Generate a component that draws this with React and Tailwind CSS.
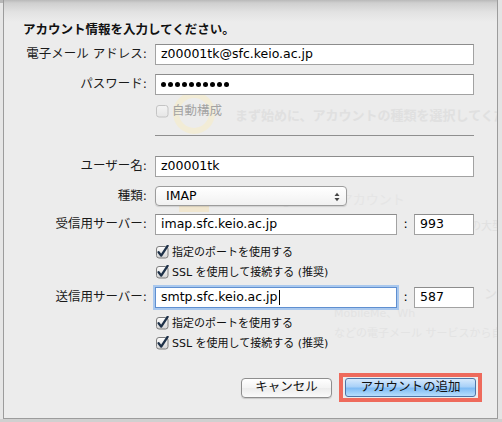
import React from "react"

const font = "font-['DejaVu_Sans','Noto_Sans_CJK_JP',sans-serif]"

function Box({ checked, disabled }) {
  return (
    <svg width="14" height="14" viewBox="0 0 14 14" className="shrink-0">
      <defs>
        <linearGradient id={checked ? "cbg" : "cbd"} x1="0" y1="0" x2="0" y2="1">
          <stop offset="0" stopColor={disabled ? "#f4f4f4" : "#ffffff"} />
          <stop offset="1" stopColor={disabled ? "#e6e6e6" : "#d4d4d4"} />
        </linearGradient>
      </defs>
      <rect x="1.5" y="1.5" width="11.5" height="11.5" rx="2.5"
        fill={`url(#${checked ? "cbg" : "cbd"})`}
        stroke={disabled ? "#c4c4c4" : "#7d7d7d"} />
      {checked && (
        <path d="M3.6 7.2 L6.2 10.6 L12.6 0.8" fill="none" stroke="#1e3148" strokeWidth="2.3" strokeLinecap="round" strokeLinejoin="round" />
      )}
    </svg>
  )
}

function Check({ label, checked = true, disabled = false, small = true }) {
  return (
    <div className="flex h-[20px] items-center gap-[3px] pl-[151px]">
      <Box checked={checked} disabled={disabled} />
      <span className={`${small ? "text-[11px]" : "text-[12.5px]"} ${disabled ? "text-[#a3a3a3]" : "text-[#111]"} leading-none`}>{label}</span>
    </div>
  )
}

function Row({ label, children, className = "" }) {
  return (
    <div className={`grid grid-cols-[143px_1fr] items-center gap-[8px] ${className}`}>
      <div className="text-right text-[12.5px] text-[#1a1a1a] leading-none">{label}</div>
      <div className="flex items-center">{children}</div>
    </div>
  )
}

function Field({ value, width = "w-[319px]", focused, children }) {
  return (
    <div className={`flex h-[21px] ${width} items-center bg-white pl-[5px] text-[12.5px] text-black border ${focused ? "border-[#5f8fd0] shadow-[0_0_0_2px_#a9c8ee]" : "border-[#a2a2a2] border-t-[#8c8c8c]"}`}>
      {value}
      {children}
    </div>
  )
}

function Ghost({ className, children }) {
  return <div className={`absolute whitespace-nowrap text-[#e0e0e0] ${className}`}>{children}</div>
}

export default function App() {
  return (
    <div className={`h-[422px] w-[502px] overflow-hidden bg-[#dedede] ${font}`}>
      <div className="flex h-[419px]">
        <div className="w-[3px] bg-[#e6e6e6] border-t-[3px] border-[#b8b8b8]" />
        <div className="relative w-[495px] overflow-hidden border-x border-b border-[#9c9c9c] bg-[#ececec] bg-[linear-gradient(to_bottom,#b9b9b9_0px,#cfcfcf_3px,#e2e2e2_12px,#ececec_22px)]">
          {/* underlying window, seen through the sheet */}
          <div className="absolute left-[169px] top-[92px] h-[42px] w-[42px] rounded-full border-[6px] border-[#f2ecd6]" />
          <Ghost className="left-[231px] top-[106px] text-[13px] font-bold">まず始めに、アカウントの種類を選択してくだ</Ghost>
          <Ghost className="left-[231px] top-[190px] text-[13px] text-[#e5e5e5]">Exchange 2007 アカウント</Ghost>
          <div className="absolute left-[175px] top-[203px] h-[9px] w-[30px] bg-[#f0e6cf]" />
          <Ghost className="left-[466px] top-[219px] text-[11px]">の大型</Ghost>
          <Ghost className="left-[480px] top-[284px] text-[13px]">ン</Ghost>
          <Ghost className="left-[330px] top-[306px] text-[11px] text-[#e3e3e3]">MobileMe、Wh</Ghost>
          <Ghost className="left-[330px] top-[326px] text-[11px] text-[#e3e3e3]">などの電子メール サービスから自</Ghost>

          <div className="relative">
            <div className="pt-[22px] pl-[19px] text-[12.5px] font-bold leading-[16px] text-[#111]">
              アカウント情報を入力してください。
            </div>

            <Row label="電子メール アドレス:" className="mt-[6px]">
              <Field value="z00001tk@sfc.keio.ac.jp" />
            </Row>
            <Row label="パスワード:" className="mt-[9px]">
              <Field>
                <div className="flex gap-[2px]">
                  {Array.from({ length: 10 }).map((_, i) => (
                    <span key={i} className="h-[5px] w-[5px] rounded-full bg-black" />
                  ))}
                </div>
              </Field>
            </Row>

            <div className="mt-[8px] h-[16px]">
              <div className="-mt-[2px]">
                <Check label="自動構成" checked={false} disabled small={false} />
              </div>
            </div>

            <div className="ml-[151px] mt-[18px] h-px w-[319px] bg-[#8f8f8f]" />

            <Row label="ユーザー名:" className="mt-[20px]">
              <Field value="z00001tk" />
            </Row>

            <Row label="種類:" className="mt-[9px]">
              <div className="relative flex h-[20px] w-[192px] items-center rounded-[4px] border border-[#9c9c9c] bg-[linear-gradient(to_bottom,#ffffff,#f1f1f1)] pl-[10px] text-[12.5px] text-black shadow-[0_1px_1px_rgba(0,0,0,0.12)]">
                IMAP
                <svg className="absolute right-[6px] top-[5px]" width="6" height="10" viewBox="0 0 6 10">
                  <path d="M0.5 4 L3 0.8 L5.5 4 Z" fill="#444" />
                  <path d="M0.5 6 L3 9.2 L5.5 6 Z" fill="#444" />
                </svg>
              </div>
            </Row>

            <Row label="受信用サーバー:" className="mt-[8px]">
              <Field value="imap.sfc.keio.ac.jp" width="w-[242px]" />
              <span className="w-[17px] text-center text-[12.5px]">:</span>
              <Field value="993" width="w-[60px]" />
            </Row>

            <div className="mt-[7px]">
              <Check label="指定のポートを使用する" />
              <Check label="SSL を使用して接続する (推奨)" />
            </div>

            <Row label="送信用サーバー:" className="mt-[5px]">
              <Field value="smtp.sfc.keio.ac.jp" width="w-[242px]" focused>
                <span className="ml-px h-[15px] w-px bg-black" />
              </Field>
              <span className="w-[17px] text-center text-[12.5px]">:</span>
              <Field value="587" width="w-[60px]" />
            </Row>

            <div className="mt-[5px]">
              <Check label="指定のポートを使用する" />
              <Check label="SSL を使用して接続する (推奨)" />
            </div>

            <div className="mt-[20px] flex items-center justify-end gap-[7px] pr-[15px]">
              <button className="flex h-[20px] w-[91px] items-center justify-center rounded-[4px] border border-[#8e8e8e] bg-[linear-gradient(to_bottom,#ffffff,#f3f3f3_50%,#ececec_51%,#fafafa)] text-[12.5px] text-[#111] shadow-[0_1px_1px_rgba(0,0,0,0.15)]">
                キャンセル
              </button>
              <div className="border-[4px] border-[#ee6a5c] p-[1px] px-[2px]">
                <button className="flex h-[19px] w-[131px] items-center justify-center rounded-[3px] border border-[#4f74a6] bg-[linear-gradient(to_bottom,#d6e9fc,#a9d1f8_45%,#80bcf4_55%,#b7defc)] text-[12.5px] text-[#111]">
                  アカウントの追加
                </button>
              </div>
            </div>
          </div>
        </div>
        <div className="w-[4px] bg-[#e4e4e4]" />
      </div>
      <div className="h-[3px] bg-[#d0d0d0]" />
    </div>
  )
}
